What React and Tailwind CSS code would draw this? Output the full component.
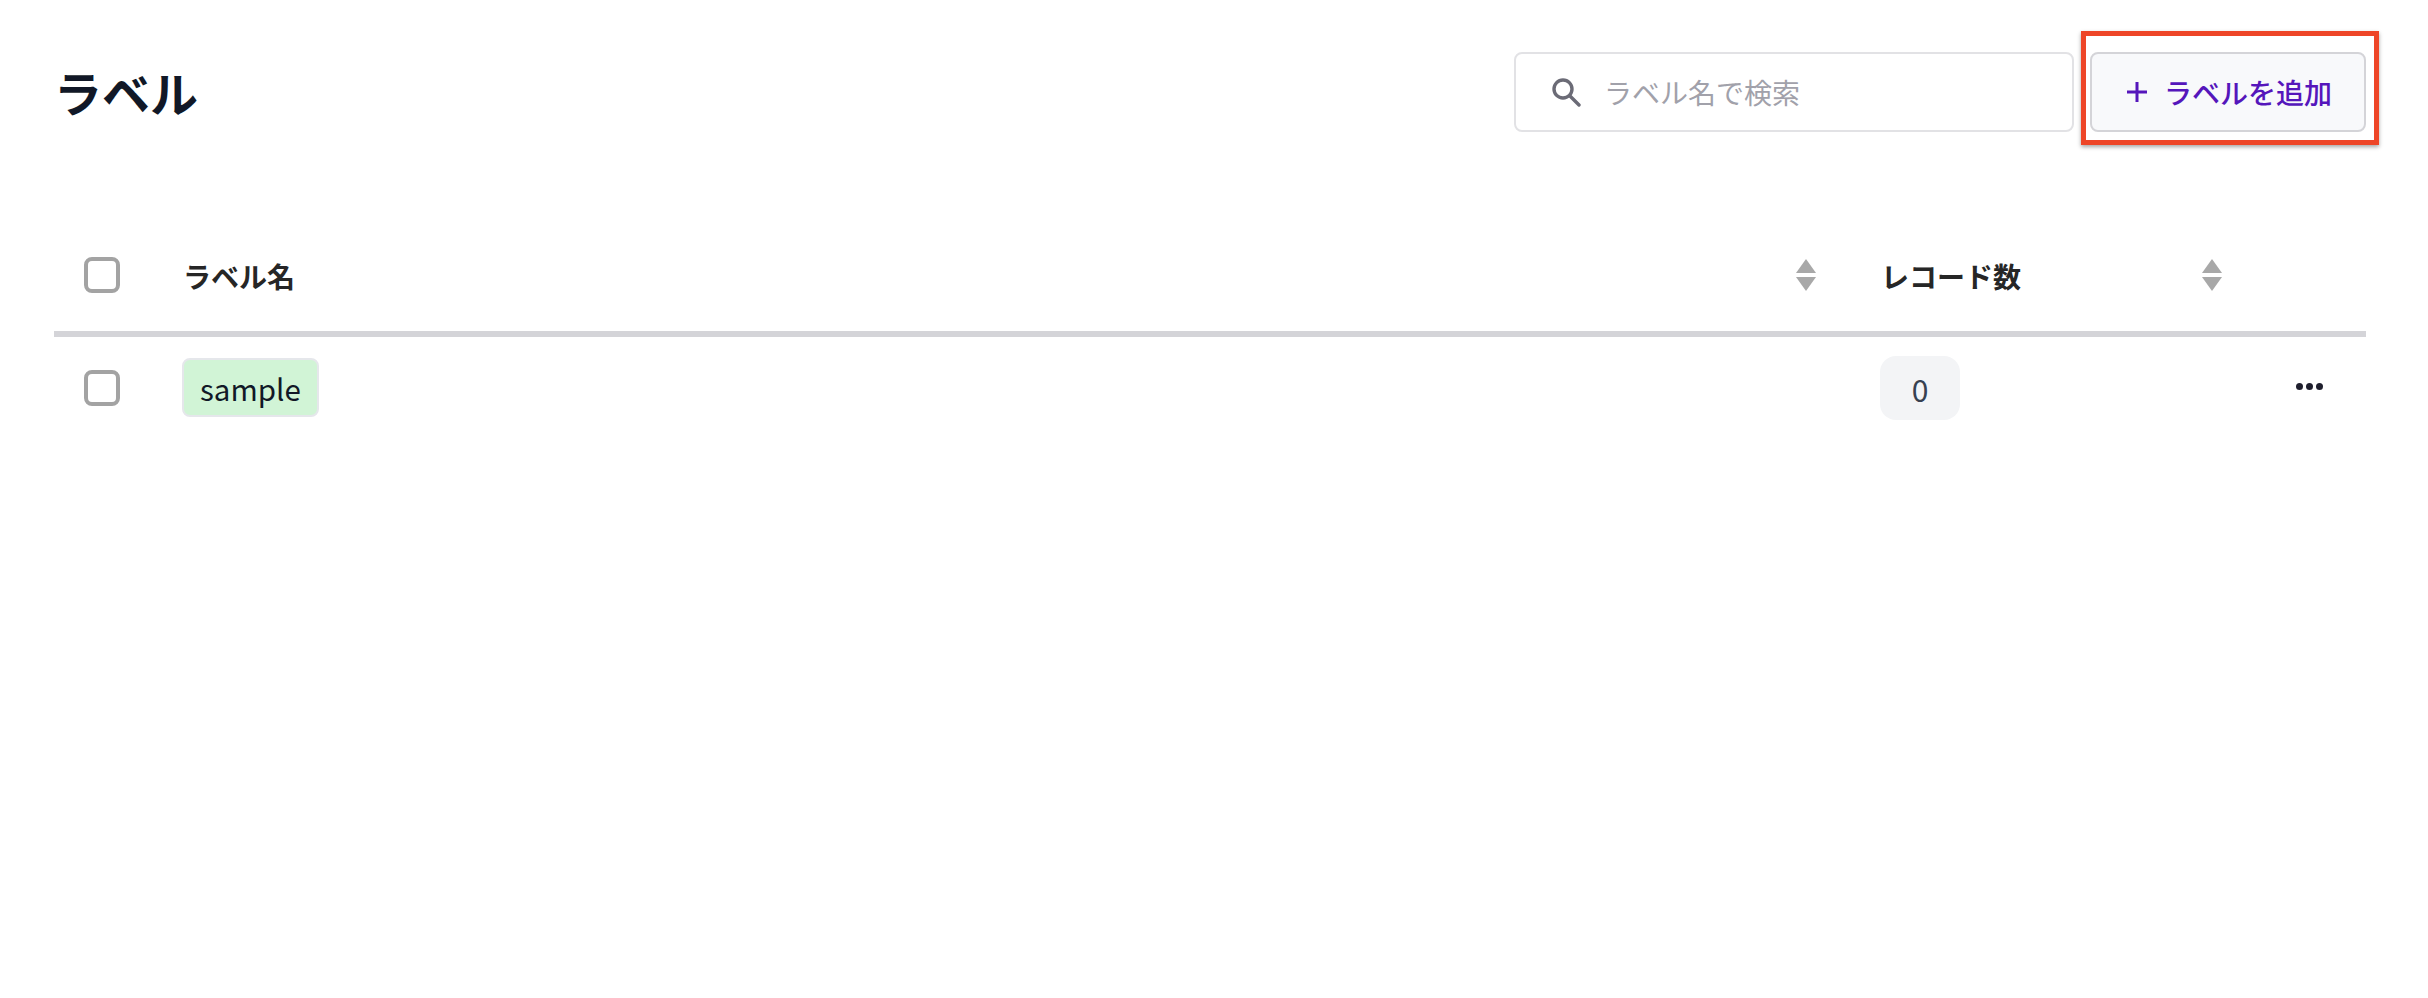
import React from "react";

const FONT = "font-['Noto_Sans_CJK_JP','Noto_Sans',sans-serif]";

function Check() {
  return <span className="block w-9 h-9 rounded-lg border-4 border-[#a3a3a3] bg-white" />;
}

function SortIcon() {
  return (
    <svg width="20" height="32" viewBox="0 0 20 32" className="shrink-0 block" aria-hidden="true">
      <path d="M10 0 L20 14 L0 14 Z" fill="#a8a8a8" />
      <path d="M0 18 L20 18 L10 32 Z" fill="#a8a8a8" />
    </svg>
  );
}

export default function App() {
  return (
    <div className={`${FONT} relative w-[2428px] h-[998px] bg-white pl-[54px] pr-[62px] pt-[52px] overflow-hidden`}>
      <header className="flex items-center h-[80px]">
        <h1 className="text-[48px] leading-[64px] font-bold text-[#111827] flex-1 mt-[-2px]">ラベル</h1>
        <div className="flex items-center w-[560px] h-[80px] border-2 border-[#e2e2e5] rounded-lg bg-white pl-[35px]">
          <svg width="30" height="30" viewBox="0 0 30 30" fill="none" stroke="#6b6b76" strokeWidth="3.4" strokeLinecap="round" aria-hidden="true">
            <circle cx="12" cy="12" r="9" />
            <path d="M19 19 L28 28" />
          </svg>
          <span className="ml-[23px] text-[28px] leading-none text-[#a1a1aa]">ラベル名で検索</span>
        </div>
        <button className="flex items-center justify-center ml-[16px] w-[276px] h-[80px] border-2 border-[#d4d4d8] rounded-lg bg-[#f8f9fb] text-[#5516bb] text-[28px] font-medium pl-[2px]">
          <svg width="22" height="22" viewBox="0 0 22 22" stroke="#5516bb" strokeWidth="3" aria-hidden="true">
            <path d="M11 1 V21 M1 11 H21" />
          </svg>
          <span className="ml-[16px]">ラベルを追加</span>
        </button>
      </header>

      <div className="mt-[87px]">
        <div className="grid grid-cols-[128px_1698px_342px_1fr] items-center h-[112px] border-b-[6px] border-[#d4d4d8] box-content">
          <div className="pl-[30px]"><Check /></div>
          <div className="flex items-center justify-between pr-[64px]">
            <span className="text-[28px] font-bold text-[#262626] pl-[1px] mt-[2px]">ラベル名</span>
            <SortIcon />
          </div>
          <div className="flex items-center justify-between">
            <span className="text-[28px] font-bold text-[#262626] pl-[1px] mt-[2px]">レコード数</span>
            <SortIcon />
          </div>
          <div />
        </div>
        <div className="grid grid-cols-[128px_1698px_342px_1fr] items-center h-[102px]">
          <div className="pl-[30px]"><Check /></div>
          <div className="mb-[1px]">
            <span className="inline-flex items-center h-[59px] px-[16px] pt-[2px] rounded-lg border-2 border-[#e5e7eb] bg-[#d1f4d6] text-[29.5px] leading-none text-[#111827]">sample</span>
          </div>
          <div>
            <span className="inline-flex items-center justify-center w-[80px] h-[64px] pt-[2px] rounded-2xl bg-[#f3f4f6] text-[30px] text-[#374151]">0</span>
          </div>
          <div className="flex justify-end pr-[43px] gap-[3px] mb-[4px]">
            <span className="w-[7px] h-[7px] rounded-full bg-[#1f1f2e]" />
            <span className="w-[7px] h-[7px] rounded-full bg-[#1f1f2e]" />
            <span className="w-[7px] h-[7px] rounded-full bg-[#1f1f2e]" />
          </div>
        </div>
      </div>

      <div className="absolute left-[2081px] top-[31px] w-[298px] h-[114px] border-[5px] border-[#ee4628] shadow-[0_2px_4px_rgba(0,0,0,0.35)]" />
    </div>
  );
}
